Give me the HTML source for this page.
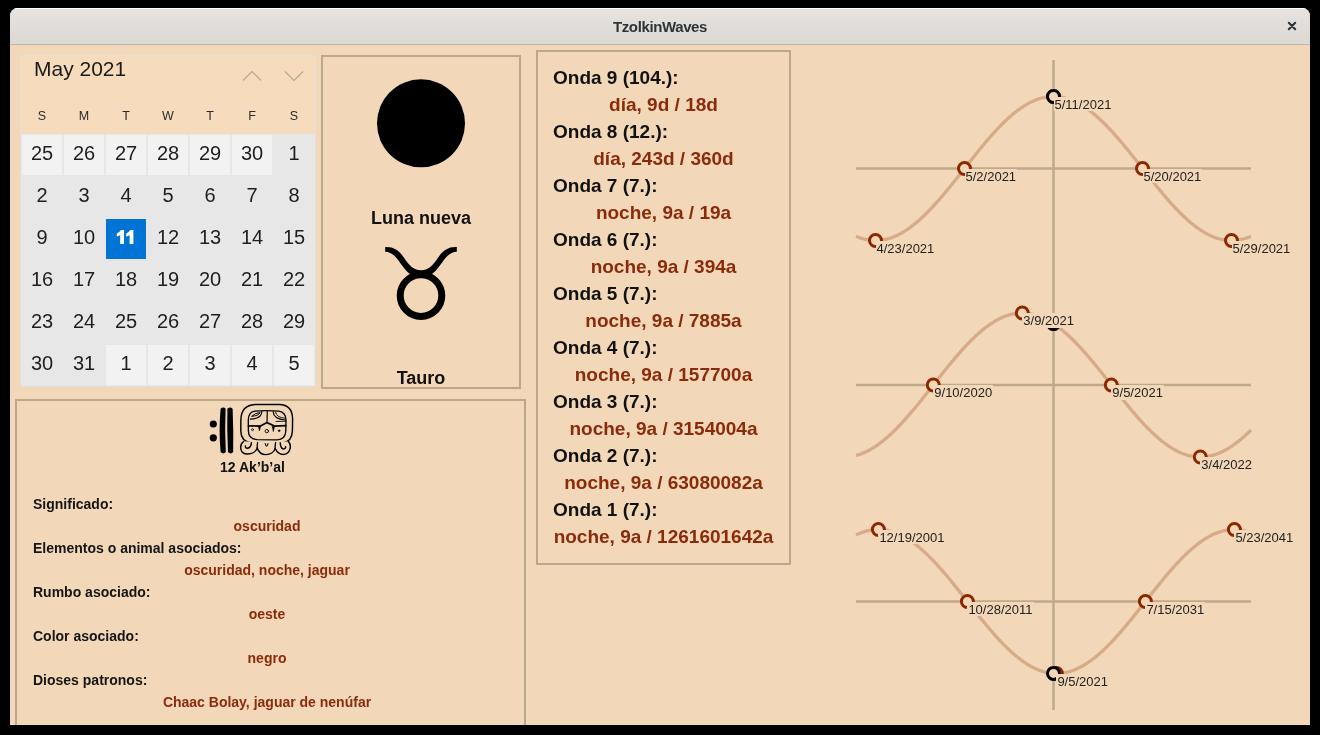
<!DOCTYPE html>
<html><head><meta charset="utf-8">
<style>
*{box-sizing:border-box}
html,body{margin:0;padding:0;width:1320px;height:735px;overflow:hidden;background:#000}
body{font-family:"Liberation Sans",sans-serif;position:relative;will-change:transform}
.win{position:absolute;left:10px;top:8px;width:1300px;height:717px;border-radius:8px 8px 0 0;overflow:hidden;background:#f2d8b8}
.tb{position:absolute;left:0;top:0;width:1300px;height:37px;background:linear-gradient(#e6e3e0,#dcd8d4);border-bottom:1px solid #bdb6ae;box-shadow:inset 0 1px #fff}
.title{position:absolute;left:0;top:0;width:1300px;text-align:center;line-height:36px;font-weight:bold;font-size:15px;letter-spacing:-0.38px;color:#2e3436;padding-top:1px}
.abs{position:absolute}
.cal{position:absolute;left:20px;top:55px;width:296px;height:332px;border:1px solid #e3e0dc;border-radius:3px;background:#f6dcbd;overflow:hidden}
.grid{position:absolute;left:21px;top:134px;width:294px;height:252px;background:#e7e7e7}
.c{position:absolute;width:40px;height:40px;text-align:center;line-height:37px;font-size:20px;color:#1e1e1e}
.c.o{background:#f2f2f2}
.c.sel{background:#0074d4;color:#fff;font-weight:bold}
.dn{position:absolute;top:109px;width:40px;text-align:center;font-size:12.5px;color:#2a2a2a}
.panel{position:absolute;border:2px solid #bba78c}
svg .ax{stroke:#bfa98b;stroke-width:2.5}
svg .cv{stroke:#d7ab88;stroke-width:3.3;fill:none}
svg .rg{stroke:#8b2800;stroke-width:3;fill:#f2d8b8}
svg .rgb{stroke:#000;stroke-width:3;fill:#f2d8b8}
.lb{position:absolute;background:#f2d8b8;font-size:13px;line-height:14.5px;height:14.5px;padding:1px 1px 0 1px;color:#222;white-space:nowrap}
.ol{position:absolute;left:553px;font-size:19px;font-weight:bold;color:#111;white-space:nowrap}
.ov{position:absolute;left:537px;width:253px;text-align:center;font-size:19px;font-weight:bold;color:#8a2c0c;white-space:nowrap}
.kl{position:absolute;left:33px;font-size:14px;font-weight:bold;color:#151515;white-space:nowrap}
.kv{position:absolute;left:15px;width:504px;text-align:center;font-size:14px;font-weight:bold;color:#8a2c0c;white-space:nowrap}
</style></head><body>
<div class="win">
 <div class="tb"><div class="title">TzolkinWaves</div></div>
</div>
<svg class="abs" style="left:1284px;top:18px" width="16" height="16" viewBox="0 0 16 16"><path d="M4.8 4.8 L11.2 11.2 M11.2 4.8 L4.8 11.2" stroke="#2e3436" stroke-width="2.1" stroke-linecap="round"/></svg>

<div class="cal">
</div>
<div class="abs" style="left:34px;top:57.3px;font-size:21px;color:#1a1a1a;line-height:24px">May 2021</div>
<svg class="abs" style="left:240px;top:66px" width="70" height="20" viewBox="240 66 70 20"><path d="M243 80.5 L252 71.5 L261 80.5 M285 71.5 L294 80.5 L303 71.5" stroke="#b8a88e" stroke-width="1.2" fill="none"/></svg>
<div class="dn" style="left:22px">S</div><div class="dn" style="left:64px">M</div><div class="dn" style="left:106px">T</div><div class="dn" style="left:148px">W</div><div class="dn" style="left:190px">T</div><div class="dn" style="left:232px">F</div><div class="dn" style="left:274px">S</div>
<div class="grid"></div>
<div class="c o" style="left:22px;top:135px">25</div>
<div class="c o" style="left:64px;top:135px">26</div>
<div class="c o" style="left:106px;top:135px">27</div>
<div class="c o" style="left:148px;top:135px">28</div>
<div class="c o" style="left:190px;top:135px">29</div>
<div class="c o" style="left:232px;top:135px">30</div>
<div class="c" style="left:274px;top:135px">1</div>
<div class="c" style="left:22px;top:177px">2</div>
<div class="c" style="left:64px;top:177px">3</div>
<div class="c" style="left:106px;top:177px">4</div>
<div class="c" style="left:148px;top:177px">5</div>
<div class="c" style="left:190px;top:177px">6</div>
<div class="c" style="left:232px;top:177px">7</div>
<div class="c" style="left:274px;top:177px">8</div>
<div class="c" style="left:22px;top:219px">9</div>
<div class="c" style="left:64px;top:219px">10</div>
<div class="c sel" style="left:106px;top:219px"><svg width="40" height="40" viewBox="106 219 40 40" style="display:block"><path d="M120.2 244 L124 244 L124 230 L121 230 Q119.5 232.4 116.8 233.4 L116.8 236.6 Q118.8 236 120.2 235 Z M129.6 244 L133.4 244 L133.4 230 L130.4 230 Q128.9 232.4 126.2 233.4 L126.2 236.6 Q128.2 236 129.6 235 Z" fill="#fff"/></svg></div>
<div class="c" style="left:148px;top:219px">12</div>
<div class="c" style="left:190px;top:219px">13</div>
<div class="c" style="left:232px;top:219px">14</div>
<div class="c" style="left:274px;top:219px">15</div>
<div class="c" style="left:22px;top:261px">16</div>
<div class="c" style="left:64px;top:261px">17</div>
<div class="c" style="left:106px;top:261px">18</div>
<div class="c" style="left:148px;top:261px">19</div>
<div class="c" style="left:190px;top:261px">20</div>
<div class="c" style="left:232px;top:261px">21</div>
<div class="c" style="left:274px;top:261px">22</div>
<div class="c" style="left:22px;top:303px">23</div>
<div class="c" style="left:64px;top:303px">24</div>
<div class="c" style="left:106px;top:303px">25</div>
<div class="c" style="left:148px;top:303px">26</div>
<div class="c" style="left:190px;top:303px">27</div>
<div class="c" style="left:232px;top:303px">28</div>
<div class="c" style="left:274px;top:303px">29</div>
<div class="c" style="left:22px;top:345px">30</div>
<div class="c" style="left:64px;top:345px">31</div>
<div class="c o" style="left:106px;top:345px">1</div>
<div class="c o" style="left:148px;top:345px">2</div>
<div class="c o" style="left:190px;top:345px">3</div>
<div class="c o" style="left:232px;top:345px">4</div>
<div class="c o" style="left:274px;top:345px">5</div>

<div class="panel" style="left:321px;top:55px;width:200px;height:334px"></div>
<svg class="abs" style="left:321px;top:55px" width="200" height="334" viewBox="321 55 200 334">
<circle cx="421" cy="123.3" r="44" fill="#000"/>
<path d="M385.2 247 C394 246.6 399 250.5 403.5 257 C408.5 264.5 413 270.2 421 270.2 C429 270.2 433.5 264.5 438.5 257 C443 250.5 448 246.6 456.8 247 L456.8 251.8 C451.5 252 447.5 255 443.5 260.5 C439 267 434 273.5 428 277 L414 277 C408 273.5 403 267 398.5 260.5 C394.5 255 390.5 252 385.2 251.8 Z" fill="#000"/>
<circle cx="421" cy="295.6" r="20.8" stroke="#000" stroke-width="7" fill="none"/>
</svg>
<div class="abs" style="left:321px;top:208px;width:200px;text-align:center;font-weight:bold;font-size:18px;color:#111">Luna nueva</div>
<div class="abs" style="left:321px;top:367.5px;width:200px;text-align:center;font-weight:bold;font-size:18px;color:#111">Tauro</div>

<div class="panel" style="left:15px;top:399px;width:511px;height:340px"></div>
<svg style="position:absolute;left:205px;top:400px" width="31" height="60" viewBox="205 400 31 60">
<circle cx="213.3" cy="424" r="3.6" fill="#000"/>
<circle cx="213.3" cy="437.8" r="3.6" fill="#000"/>
<path d="M220.6 408.8 Q223.3 406.2 225.6 408.6 Q224.6 430 225.8 452 Q223.2 454.8 220.6 452 Q218.6 430 220.6 408.8 Z" fill="#000"/>
<path d="M227.4 408.8 Q230.2 406.4 232.6 408.8 Q233.6 430 233.2 452 Q230.6 454.8 228 452 Q226.8 430 227.4 408.8 Z" fill="#000"/>
</svg>
<svg style="position:absolute;left:236px;top:400px" width="60" height="60" viewBox="236 400 60 60">
<g fill="none" stroke="#000" stroke-linecap="round" stroke-linejoin="round">
<path d="M255 404.5 L279 404.5 Q292.5 404.8 292.6 419 L292.4 431 Q292 441.5 283 442.6 L251 442.6 Q241 441.5 240.8 431 L240.9 420 Q241 405.2 255 404.5 Z" stroke-width="1.45"/>
<path d="M255 411.1 Q267 410.2 279 411.2 Q285.8 412.5 286 420 L285.8 431 Q285.5 439.6 277 439.8 L257 439.6 Q248.6 439.2 248.4 431 L248.3 420 Q248.6 411.6 255 411.1 Z" stroke-width="1.35"/>
<path d="M248.4 426 Q254 425.6 260 426.2 L267 422.6 L275 426.2 Q280 426 285.9 425.6" stroke-width="1.7"/>
<path d="M261.8 411.6 Q262 418.5 250.4 419.2" stroke-width="1.2"/>
<path d="M252 416.2 Q255 412.8 260 412.6 Q258.5 416 252 416.2 Z" stroke-width="1.0"/>
<path d="M267.3 411.2 L267 422.6" stroke-width="1.2"/>
<path d="M273.2 411.8 Q273.5 419.2 285.4 420" stroke-width="1.2"/>
<path d="M275.6 412.3 Q276.5 417.6 285 418.2" stroke-width="0.9"/>
<path d="M276 421.4 L285.8 421.2" stroke-width="0.9"/>
<path d="M258.3 426.2 L259.4 430.8 L260.8 426.2 Z M272.2 426.2 L273.3 431.6 L274.6 426.2 Z" fill="#000" stroke-width="0.6"/>
<circle cx="252.5" cy="429.7" r="1.0" stroke-width="0.7"/>
<circle cx="266.8" cy="431.1" r="1.7" stroke-width="0.9"/>
<circle cx="279.1" cy="430.7" r="0.9" fill="#000" stroke-width="0.5"/>
<path d="M243.6 441.5 C239 445 239.6 454 247.6 454 C252 454 256 451.5 257.2 448 C258.5 452 262 454.6 266 454.6 C270 454.6 274 452.2 275.2 448.5 C277 452.5 280 454.6 284 454.4 C290.5 453.6 291.8 445.5 288.5 441.5" fill="#f2d8b8" stroke-width="1.45"/>
<path d="M257.2 448 Q257 445 257.6 442.6 M275.2 448.5 Q275 445.5 275.6 442.6" stroke-width="1.3"/>
<path d="M251.4 442.6 Q251.2 447.6 247.4 448.3 Q245.2 448.2 245.4 446" stroke-width="1.4"/>
<path d="M265.2 443.6 Q266.6 448.8 268 443.6" stroke-width="1.1"/>
<path d="M280.2 442.6 Q280.6 448.6 283.6 449 Q285.8 448.8 285.6 446.6" stroke-width="1.4"/>
</g>
</svg>

<div class="abs" style="left:15px;top:459px;width:475px;text-align:center;font-weight:bold;font-size:14px;color:#111">12 Ak’b’al</div>
<div class="kl" style="top:496px">Significado:</div>
<div class="kv" style="top:518px">oscuridad</div>
<div class="kl" style="top:540px">Elementos o animal asociados:</div>
<div class="kv" style="top:562px">oscuridad, noche, jaguar</div>
<div class="kl" style="top:584px">Rumbo asociado:</div>
<div class="kv" style="top:606px">oeste</div>
<div class="kl" style="top:628px">Color asociado:</div>
<div class="kv" style="top:650px">negro</div>
<div class="kl" style="top:672px">Dioses patronos:</div>
<div class="kv" style="top:694px">Chaac Bolay, jaguar de nenúfar</div>

<div class="panel" style="left:536px;top:50px;width:255px;height:515px"></div>
<div class="ol" style="top:66.5px">Onda 9 (104.):</div>
<div class="ov" style="top:93.5px">día, 9d / 18d</div>
<div class="ol" style="top:120.5px">Onda 8 (12.):</div>
<div class="ov" style="top:147.5px">día, 243d / 360d</div>
<div class="ol" style="top:174.5px">Onda 7 (7.):</div>
<div class="ov" style="top:201.5px">noche, 9a / 19a</div>
<div class="ol" style="top:228.5px">Onda 6 (7.):</div>
<div class="ov" style="top:255.5px">noche, 9a / 394a</div>
<div class="ol" style="top:282.5px">Onda 5 (7.):</div>
<div class="ov" style="top:309.5px">noche, 9a / 7885a</div>
<div class="ol" style="top:336.5px">Onda 4 (7.):</div>
<div class="ov" style="top:363.5px">noche, 9a / 157700a</div>
<div class="ol" style="top:390.5px">Onda 3 (7.):</div>
<div class="ov" style="top:417.5px">noche, 9a / 3154004a</div>
<div class="ol" style="top:444.5px">Onda 2 (7.):</div>
<div class="ov" style="top:471.5px">noche, 9a / 63080082a</div>
<div class="ol" style="top:498.5px">Onda 1 (7.):</div>
<div class="ov" style="top:525.5px">noche, 9a / 1261601642a</div>

<svg class="abs" style="left:0;top:0" width="1320" height="735" viewBox="0 0 1320 735">
<line x1="1053.5" y1="60" x2="1053.5" y2="710" class="ax"/>
<line x1="856" y1="168.5" x2="1251" y2="168.5" class="ax"/>
<line x1="856" y1="385.0" x2="1251" y2="385.0" class="ax"/>
<line x1="856" y1="601.5" x2="1251" y2="601.5" class="ax"/>
<path d="M856.0,236.28 L857.0,236.70 L858.0,237.09 L859.0,237.47 L860.0,237.82 L861.0,238.16 L862.0,238.47 L863.0,238.75 L864.0,239.02 L865.0,239.27 L866.0,239.49 L867.0,239.69 L868.0,239.87 L869.0,240.03 L870.0,240.16 L871.0,240.27 L872.0,240.36 L873.0,240.43 L874.0,240.47 L875.0,240.50 L876.0,240.50 L877.0,240.47 L878.0,240.43 L879.0,240.36 L880.0,240.27 L881.0,240.16 L882.0,240.03 L883.0,239.87 L884.0,239.69 L885.0,239.49 L886.0,239.27 L887.0,239.02 L888.0,238.75 L889.0,238.47 L890.0,238.16 L891.0,237.82 L892.0,237.47 L893.0,237.09 L894.0,236.70 L895.0,236.28 L896.0,235.84 L897.0,235.38 L898.0,234.90 L899.0,234.40 L900.0,233.87 L901.0,233.33 L902.0,232.77 L903.0,232.18 L904.0,231.58 L905.0,230.96 L906.0,230.32 L907.0,229.66 L908.0,228.98 L909.0,228.28 L910.0,227.56 L911.0,226.82 L912.0,226.07 L913.0,225.30 L914.0,224.51 L915.0,223.70 L916.0,222.88 L917.0,222.03 L918.0,221.18 L919.0,220.30 L920.0,219.41 L921.0,218.51 L922.0,217.58 L923.0,216.65 L924.0,215.69 L925.0,214.73 L926.0,213.75 L927.0,212.75 L928.0,211.74 L929.0,210.72 L930.0,209.68 L931.0,208.63 L932.0,207.57 L933.0,206.50 L934.0,205.41 L935.0,204.32 L936.0,203.21 L937.0,202.09 L938.0,200.96 L939.0,199.82 L940.0,198.67 L941.0,197.51 L942.0,196.35 L943.0,195.17 L944.0,193.99 L945.0,192.79 L946.0,191.59 L947.0,190.39 L948.0,189.17 L949.0,187.95 L950.0,186.73 L951.0,185.49 L952.0,184.26 L953.0,183.01 L954.0,181.77 L955.0,180.52 L956.0,179.26 L957.0,178.00 L958.0,176.74 L959.0,175.48 L960.0,174.21 L961.0,172.94 L962.0,171.68 L963.0,170.41 L964.0,169.14 L965.0,167.86 L966.0,166.59 L967.0,165.32 L968.0,164.06 L969.0,162.79 L970.0,161.52 L971.0,160.26 L972.0,159.00 L973.0,157.74 L974.0,156.48 L975.0,155.23 L976.0,153.99 L977.0,152.74 L978.0,151.51 L979.0,150.27 L980.0,149.05 L981.0,147.83 L982.0,146.61 L983.0,145.41 L984.0,144.21 L985.0,143.01 L986.0,141.83 L987.0,140.65 L988.0,139.49 L989.0,138.33 L990.0,137.18 L991.0,136.04 L992.0,134.91 L993.0,133.79 L994.0,132.68 L995.0,131.59 L996.0,130.50 L997.0,129.43 L998.0,128.37 L999.0,127.32 L1000.0,126.28 L1001.0,125.26 L1002.0,124.25 L1003.0,123.25 L1004.0,122.27 L1005.0,121.31 L1006.0,120.35 L1007.0,119.42 L1008.0,118.49 L1009.0,117.59 L1010.0,116.70 L1011.0,115.82 L1012.0,114.97 L1013.0,114.12 L1014.0,113.30 L1015.0,112.49 L1016.0,111.70 L1017.0,110.93 L1018.0,110.18 L1019.0,109.44 L1020.0,108.72 L1021.0,108.02 L1022.0,107.34 L1023.0,106.68 L1024.0,106.04 L1025.0,105.42 L1026.0,104.82 L1027.0,104.23 L1028.0,103.67 L1029.0,103.13 L1030.0,102.60 L1031.0,102.10 L1032.0,101.62 L1033.0,101.16 L1034.0,100.72 L1035.0,100.30 L1036.0,99.91 L1037.0,99.53 L1038.0,99.18 L1039.0,98.84 L1040.0,98.53 L1041.0,98.25 L1042.0,97.98 L1043.0,97.73 L1044.0,97.51 L1045.0,97.31 L1046.0,97.13 L1047.0,96.97 L1048.0,96.84 L1049.0,96.73 L1050.0,96.64 L1051.0,96.57 L1052.0,96.53 L1053.0,96.50 L1054.0,96.50 L1055.0,96.53 L1056.0,96.57 L1057.0,96.64 L1058.0,96.73 L1059.0,96.84 L1060.0,96.97 L1061.0,97.13 L1062.0,97.31 L1063.0,97.51 L1064.0,97.73 L1065.0,97.98 L1066.0,98.25 L1067.0,98.53 L1068.0,98.84 L1069.0,99.18 L1070.0,99.53 L1071.0,99.91 L1072.0,100.30 L1073.0,100.72 L1074.0,101.16 L1075.0,101.62 L1076.0,102.10 L1077.0,102.60 L1078.0,103.13 L1079.0,103.67 L1080.0,104.23 L1081.0,104.82 L1082.0,105.42 L1083.0,106.04 L1084.0,106.68 L1085.0,107.34 L1086.0,108.02 L1087.0,108.72 L1088.0,109.44 L1089.0,110.18 L1090.0,110.93 L1091.0,111.70 L1092.0,112.49 L1093.0,113.30 L1094.0,114.12 L1095.0,114.97 L1096.0,115.82 L1097.0,116.70 L1098.0,117.59 L1099.0,118.49 L1100.0,119.42 L1101.0,120.35 L1102.0,121.31 L1103.0,122.27 L1104.0,123.25 L1105.0,124.25 L1106.0,125.26 L1107.0,126.28 L1108.0,127.32 L1109.0,128.37 L1110.0,129.43 L1111.0,130.50 L1112.0,131.59 L1113.0,132.68 L1114.0,133.79 L1115.0,134.91 L1116.0,136.04 L1117.0,137.18 L1118.0,138.33 L1119.0,139.49 L1120.0,140.65 L1121.0,141.83 L1122.0,143.01 L1123.0,144.21 L1124.0,145.41 L1125.0,146.61 L1126.0,147.83 L1127.0,149.05 L1128.0,150.27 L1129.0,151.51 L1130.0,152.74 L1131.0,153.99 L1132.0,155.23 L1133.0,156.48 L1134.0,157.74 L1135.0,159.00 L1136.0,160.26 L1137.0,161.52 L1138.0,162.79 L1139.0,164.06 L1140.0,165.32 L1141.0,166.59 L1142.0,167.86 L1143.0,169.14 L1144.0,170.41 L1145.0,171.68 L1146.0,172.94 L1147.0,174.21 L1148.0,175.48 L1149.0,176.74 L1150.0,178.00 L1151.0,179.26 L1152.0,180.52 L1153.0,181.77 L1154.0,183.01 L1155.0,184.26 L1156.0,185.49 L1157.0,186.73 L1158.0,187.95 L1159.0,189.17 L1160.0,190.39 L1161.0,191.59 L1162.0,192.79 L1163.0,193.99 L1164.0,195.17 L1165.0,196.35 L1166.0,197.51 L1167.0,198.67 L1168.0,199.82 L1169.0,200.96 L1170.0,202.09 L1171.0,203.21 L1172.0,204.32 L1173.0,205.41 L1174.0,206.50 L1175.0,207.57 L1176.0,208.63 L1177.0,209.68 L1178.0,210.72 L1179.0,211.74 L1180.0,212.75 L1181.0,213.75 L1182.0,214.73 L1183.0,215.69 L1184.0,216.65 L1185.0,217.58 L1186.0,218.51 L1187.0,219.41 L1188.0,220.30 L1189.0,221.18 L1190.0,222.03 L1191.0,222.88 L1192.0,223.70 L1193.0,224.51 L1194.0,225.30 L1195.0,226.07 L1196.0,226.82 L1197.0,227.56 L1198.0,228.28 L1199.0,228.98 L1200.0,229.66 L1201.0,230.32 L1202.0,230.96 L1203.0,231.58 L1204.0,232.18 L1205.0,232.77 L1206.0,233.33 L1207.0,233.87 L1208.0,234.40 L1209.0,234.90 L1210.0,235.38 L1211.0,235.84 L1212.0,236.28 L1213.0,236.70 L1214.0,237.09 L1215.0,237.47 L1216.0,237.82 L1217.0,238.16 L1218.0,238.47 L1219.0,238.75 L1220.0,239.02 L1221.0,239.27 L1222.0,239.49 L1223.0,239.69 L1224.0,239.87 L1225.0,240.03 L1226.0,240.16 L1227.0,240.27 L1228.0,240.36 L1229.0,240.43 L1230.0,240.47 L1231.0,240.50 L1232.0,240.50 L1233.0,240.47 L1234.0,240.43 L1235.0,240.36 L1236.0,240.27 L1237.0,240.16 L1238.0,240.03 L1239.0,239.87 L1240.0,239.69 L1241.0,239.49 L1242.0,239.27 L1243.0,239.02 L1244.0,238.75 L1245.0,238.47 L1246.0,238.16 L1247.0,237.82 L1248.0,237.47 L1249.0,237.09 L1250.0,236.70 L1251.0,236.28" class="cv"/>
<path d="M856.0,455.47 L857.0,455.20 L858.0,454.91 L859.0,454.59 L860.0,454.25 L861.0,453.90 L862.0,453.52 L863.0,453.11 L864.0,452.69 L865.0,452.25 L866.0,451.78 L867.0,451.30 L868.0,450.79 L869.0,450.27 L870.0,449.72 L871.0,449.15 L872.0,448.57 L873.0,447.96 L874.0,447.33 L875.0,446.69 L876.0,446.02 L877.0,445.34 L878.0,444.64 L879.0,443.91 L880.0,443.17 L881.0,442.42 L882.0,441.64 L883.0,440.85 L884.0,440.04 L885.0,439.21 L886.0,438.36 L887.0,437.50 L888.0,436.63 L889.0,435.73 L890.0,434.82 L891.0,433.90 L892.0,432.96 L893.0,432.00 L894.0,431.03 L895.0,430.05 L896.0,429.05 L897.0,428.04 L898.0,427.01 L899.0,425.97 L900.0,424.92 L901.0,423.86 L902.0,422.78 L903.0,421.69 L904.0,420.60 L905.0,419.49 L906.0,418.36 L907.0,417.23 L908.0,416.09 L909.0,414.94 L910.0,413.78 L911.0,412.61 L912.0,411.43 L913.0,410.25 L914.0,409.05 L915.0,407.85 L916.0,406.64 L917.0,405.43 L918.0,404.21 L919.0,402.98 L920.0,401.75 L921.0,400.51 L922.0,399.26 L923.0,398.02 L924.0,396.77 L925.0,395.51 L926.0,394.25 L927.0,392.99 L928.0,391.73 L929.0,390.46 L930.0,389.19 L931.0,387.92 L932.0,386.65 L933.0,385.38 L934.0,384.11 L935.0,382.84 L936.0,381.57 L937.0,380.30 L938.0,379.03 L939.0,377.77 L940.0,376.51 L941.0,375.25 L942.0,373.99 L943.0,372.73 L944.0,371.48 L945.0,370.24 L946.0,369.00 L947.0,367.76 L948.0,366.53 L949.0,365.30 L950.0,364.08 L951.0,362.87 L952.0,361.67 L953.0,360.47 L954.0,359.28 L955.0,358.09 L956.0,356.92 L957.0,355.75 L958.0,354.60 L959.0,353.45 L960.0,352.31 L961.0,351.19 L962.0,350.07 L963.0,348.96 L964.0,347.87 L965.0,346.79 L966.0,345.71 L967.0,344.66 L968.0,343.61 L969.0,342.58 L970.0,341.56 L971.0,340.55 L972.0,339.56 L973.0,338.58 L974.0,337.61 L975.0,336.67 L976.0,335.73 L977.0,334.81 L978.0,333.91 L979.0,333.02 L980.0,332.15 L981.0,331.30 L982.0,330.46 L983.0,329.64 L984.0,328.83 L985.0,328.05 L986.0,327.28 L987.0,326.53 L988.0,325.80 L989.0,325.08 L990.0,324.39 L991.0,323.71 L992.0,323.05 L993.0,322.41 L994.0,321.80 L995.0,321.20 L996.0,320.62 L997.0,320.06 L998.0,319.52 L999.0,319.00 L1000.0,318.51 L1001.0,318.03 L1002.0,317.57 L1003.0,317.14 L1004.0,316.72 L1005.0,316.33 L1006.0,315.96 L1007.0,315.61 L1008.0,315.28 L1009.0,314.97 L1010.0,314.69 L1011.0,314.43 L1012.0,314.19 L1013.0,313.97 L1014.0,313.77 L1015.0,313.60 L1016.0,313.44 L1017.0,313.31 L1018.0,313.21 L1019.0,313.12 L1020.0,313.06 L1021.0,313.02 L1022.0,313.00 L1023.0,313.01 L1024.0,313.03 L1025.0,313.08 L1026.0,313.15 L1027.0,313.25 L1028.0,313.36 L1029.0,313.50 L1030.0,313.66 L1031.0,313.85 L1032.0,314.05 L1033.0,314.28 L1034.0,314.53 L1035.0,314.80 L1036.0,315.09 L1037.0,315.41 L1038.0,315.75 L1039.0,316.10 L1040.0,316.48 L1041.0,316.89 L1042.0,317.31 L1043.0,317.75 L1044.0,318.22 L1045.0,318.70 L1046.0,319.21 L1047.0,319.73 L1048.0,320.28 L1049.0,320.85 L1050.0,321.43 L1051.0,322.04 L1052.0,322.67 L1053.0,323.31 L1054.0,323.98 L1055.0,324.66 L1056.0,325.36 L1057.0,326.09 L1058.0,326.83 L1059.0,327.58 L1060.0,328.36 L1061.0,329.15 L1062.0,329.96 L1063.0,330.79 L1064.0,331.64 L1065.0,332.50 L1066.0,333.37 L1067.0,334.27 L1068.0,335.18 L1069.0,336.10 L1070.0,337.04 L1071.0,338.00 L1072.0,338.97 L1073.0,339.95 L1074.0,340.95 L1075.0,341.96 L1076.0,342.99 L1077.0,344.03 L1078.0,345.08 L1079.0,346.14 L1080.0,347.22 L1081.0,348.31 L1082.0,349.40 L1083.0,350.51 L1084.0,351.64 L1085.0,352.77 L1086.0,353.91 L1087.0,355.06 L1088.0,356.22 L1089.0,357.39 L1090.0,358.57 L1091.0,359.75 L1092.0,360.95 L1093.0,362.15 L1094.0,363.36 L1095.0,364.57 L1096.0,365.79 L1097.0,367.02 L1098.0,368.25 L1099.0,369.49 L1100.0,370.74 L1101.0,371.98 L1102.0,373.23 L1103.0,374.49 L1104.0,375.75 L1105.0,377.01 L1106.0,378.27 L1107.0,379.54 L1108.0,380.81 L1109.0,382.08 L1110.0,383.35 L1111.0,384.62 L1112.0,385.89 L1113.0,387.16 L1114.0,388.43 L1115.0,389.70 L1116.0,390.97 L1117.0,392.23 L1118.0,393.49 L1119.0,394.75 L1120.0,396.01 L1121.0,397.27 L1122.0,398.52 L1123.0,399.76 L1124.0,401.00 L1125.0,402.24 L1126.0,403.47 L1127.0,404.70 L1128.0,405.92 L1129.0,407.13 L1130.0,408.33 L1131.0,409.53 L1132.0,410.72 L1133.0,411.91 L1134.0,413.08 L1135.0,414.25 L1136.0,415.40 L1137.0,416.55 L1138.0,417.69 L1139.0,418.81 L1140.0,419.93 L1141.0,421.04 L1142.0,422.13 L1143.0,423.21 L1144.0,424.29 L1145.0,425.34 L1146.0,426.39 L1147.0,427.42 L1148.0,428.44 L1149.0,429.45 L1150.0,430.44 L1151.0,431.42 L1152.0,432.39 L1153.0,433.33 L1154.0,434.27 L1155.0,435.19 L1156.0,436.09 L1157.0,436.98 L1158.0,437.85 L1159.0,438.70 L1160.0,439.54 L1161.0,440.36 L1162.0,441.17 L1163.0,441.95 L1164.0,442.72 L1165.0,443.47 L1166.0,444.20 L1167.0,444.92 L1168.0,445.61 L1169.0,446.29 L1170.0,446.95 L1171.0,447.59 L1172.0,448.20 L1173.0,448.80 L1174.0,449.38 L1175.0,449.94 L1176.0,450.48 L1177.0,451.00 L1178.0,451.49 L1179.0,451.97 L1180.0,452.43 L1181.0,452.86 L1182.0,453.28 L1183.0,453.67 L1184.0,454.04 L1185.0,454.39 L1186.0,454.72 L1187.0,455.03 L1188.0,455.31 L1189.0,455.57 L1190.0,455.81 L1191.0,456.03 L1192.0,456.23 L1193.0,456.40 L1194.0,456.56 L1195.0,456.69 L1196.0,456.79 L1197.0,456.88 L1198.0,456.94 L1199.0,456.98 L1200.0,457.00 L1201.0,456.99 L1202.0,456.97 L1203.0,456.92 L1204.0,456.85 L1205.0,456.75 L1206.0,456.64 L1207.0,456.50 L1208.0,456.34 L1209.0,456.15 L1210.0,455.95 L1211.0,455.72 L1212.0,455.47 L1213.0,455.20 L1214.0,454.91 L1215.0,454.59 L1216.0,454.25 L1217.0,453.90 L1218.0,453.52 L1219.0,453.11 L1220.0,452.69 L1221.0,452.25 L1222.0,451.78 L1223.0,451.30 L1224.0,450.79 L1225.0,450.27 L1226.0,449.72 L1227.0,449.15 L1228.0,448.57 L1229.0,447.96 L1230.0,447.33 L1231.0,446.69 L1232.0,446.02 L1233.0,445.34 L1234.0,444.64 L1235.0,443.91 L1236.0,443.17 L1237.0,442.42 L1238.0,441.64 L1239.0,440.85 L1240.0,440.04 L1241.0,439.21 L1242.0,438.36 L1243.0,437.50 L1244.0,436.63 L1245.0,435.73 L1246.0,434.82 L1247.0,433.90 L1248.0,432.96 L1249.0,432.00 L1250.0,431.03 L1251.0,430.05" class="cv"/>
<path d="M856.0,535.05 L857.0,534.57 L858.0,534.12 L859.0,533.68 L860.0,533.26 L861.0,532.87 L862.0,532.50 L863.0,532.14 L864.0,531.81 L865.0,531.50 L866.0,531.22 L867.0,530.95 L868.0,530.71 L869.0,530.49 L870.0,530.29 L871.0,530.11 L872.0,529.96 L873.0,529.83 L874.0,529.72 L875.0,529.63 L876.0,529.56 L877.0,529.52 L878.0,529.50 L879.0,529.50 L880.0,529.53 L881.0,529.58 L882.0,529.65 L883.0,529.74 L884.0,529.85 L885.0,529.99 L886.0,530.15 L887.0,530.33 L888.0,530.53 L889.0,530.76 L890.0,531.00 L891.0,531.27 L892.0,531.56 L893.0,531.88 L894.0,532.21 L895.0,532.57 L896.0,532.95 L897.0,533.34 L898.0,533.77 L899.0,534.21 L900.0,534.67 L901.0,535.15 L902.0,535.66 L903.0,536.18 L904.0,536.73 L905.0,537.29 L906.0,537.87 L907.0,538.48 L908.0,539.10 L909.0,539.75 L910.0,540.41 L911.0,541.09 L912.0,541.79 L913.0,542.51 L914.0,543.25 L915.0,544.01 L916.0,544.78 L917.0,545.57 L918.0,546.38 L919.0,547.21 L920.0,548.05 L921.0,548.91 L922.0,549.79 L923.0,550.68 L924.0,551.59 L925.0,552.51 L926.0,553.45 L927.0,554.40 L928.0,555.37 L929.0,556.35 L930.0,557.35 L931.0,558.36 L932.0,559.39 L933.0,560.42 L934.0,561.47 L935.0,562.53 L936.0,563.61 L937.0,564.70 L938.0,565.79 L939.0,566.90 L940.0,568.02 L941.0,569.15 L942.0,570.29 L943.0,571.44 L944.0,572.60 L945.0,573.77 L946.0,574.95 L947.0,576.13 L948.0,577.33 L949.0,578.53 L950.0,579.73 L951.0,580.95 L952.0,582.17 L953.0,583.40 L954.0,584.63 L955.0,585.87 L956.0,587.11 L957.0,588.36 L958.0,589.61 L959.0,590.86 L960.0,592.12 L961.0,593.38 L962.0,594.65 L963.0,595.91 L964.0,597.18 L965.0,598.45 L966.0,599.72 L967.0,600.99 L968.0,602.26 L969.0,603.53 L970.0,604.80 L971.0,606.07 L972.0,607.34 L973.0,608.60 L974.0,609.87 L975.0,611.13 L976.0,612.39 L977.0,613.64 L978.0,614.89 L979.0,616.14 L980.0,617.38 L981.0,618.62 L982.0,619.85 L983.0,621.07 L984.0,622.29 L985.0,623.51 L986.0,624.71 L987.0,625.91 L988.0,627.10 L989.0,628.29 L990.0,629.46 L991.0,630.63 L992.0,631.79 L993.0,632.94 L994.0,634.07 L995.0,635.20 L996.0,636.32 L997.0,637.43 L998.0,638.52 L999.0,639.61 L1000.0,640.68 L1001.0,641.74 L1002.0,642.79 L1003.0,643.82 L1004.0,644.84 L1005.0,645.85 L1006.0,646.84 L1007.0,647.82 L1008.0,648.79 L1009.0,649.74 L1010.0,650.68 L1011.0,651.60 L1012.0,652.50 L1013.0,653.39 L1014.0,654.26 L1015.0,655.12 L1016.0,655.96 L1017.0,656.78 L1018.0,657.59 L1019.0,658.38 L1020.0,659.15 L1021.0,659.90 L1022.0,660.63 L1023.0,661.35 L1024.0,662.05 L1025.0,662.72 L1026.0,663.38 L1027.0,664.02 L1028.0,664.64 L1029.0,665.24 L1030.0,665.82 L1031.0,666.39 L1032.0,666.93 L1033.0,667.45 L1034.0,667.95 L1035.0,668.43 L1036.0,668.88 L1037.0,669.32 L1038.0,669.74 L1039.0,670.13 L1040.0,670.50 L1041.0,670.86 L1042.0,671.19 L1043.0,671.50 L1044.0,671.78 L1045.0,672.05 L1046.0,672.29 L1047.0,672.51 L1048.0,672.71 L1049.0,672.89 L1050.0,673.04 L1051.0,673.17 L1052.0,673.28 L1053.0,673.37 L1054.0,673.44 L1055.0,673.48 L1056.0,673.50 L1057.0,673.50 L1058.0,673.47 L1059.0,673.42 L1060.0,673.35 L1061.0,673.26 L1062.0,673.15 L1063.0,673.01 L1064.0,672.85 L1065.0,672.67 L1066.0,672.47 L1067.0,672.24 L1068.0,672.00 L1069.0,671.73 L1070.0,671.44 L1071.0,671.12 L1072.0,670.79 L1073.0,670.43 L1074.0,670.05 L1075.0,669.66 L1076.0,669.23 L1077.0,668.79 L1078.0,668.33 L1079.0,667.85 L1080.0,667.34 L1081.0,666.82 L1082.0,666.27 L1083.0,665.71 L1084.0,665.13 L1085.0,664.52 L1086.0,663.90 L1087.0,663.25 L1088.0,662.59 L1089.0,661.91 L1090.0,661.21 L1091.0,660.49 L1092.0,659.75 L1093.0,658.99 L1094.0,658.22 L1095.0,657.43 L1096.0,656.62 L1097.0,655.79 L1098.0,654.95 L1099.0,654.09 L1100.0,653.21 L1101.0,652.32 L1102.0,651.41 L1103.0,650.49 L1104.0,649.55 L1105.0,648.60 L1106.0,647.63 L1107.0,646.65 L1108.0,645.65 L1109.0,644.64 L1110.0,643.61 L1111.0,642.58 L1112.0,641.53 L1113.0,640.47 L1114.0,639.39 L1115.0,638.30 L1116.0,637.21 L1117.0,636.10 L1118.0,634.98 L1119.0,633.85 L1120.0,632.71 L1121.0,631.56 L1122.0,630.40 L1123.0,629.23 L1124.0,628.05 L1125.0,626.87 L1126.0,625.67 L1127.0,624.47 L1128.0,623.27 L1129.0,622.05 L1130.0,620.83 L1131.0,619.60 L1132.0,618.37 L1133.0,617.13 L1134.0,615.89 L1135.0,614.64 L1136.0,613.39 L1137.0,612.14 L1138.0,610.88 L1139.0,609.62 L1140.0,608.35 L1141.0,607.09 L1142.0,605.82 L1143.0,604.55 L1144.0,603.28 L1145.0,602.01 L1146.0,600.74 L1147.0,599.47 L1148.0,598.20 L1149.0,596.93 L1150.0,595.66 L1151.0,594.40 L1152.0,593.13 L1153.0,591.87 L1154.0,590.61 L1155.0,589.36 L1156.0,588.11 L1157.0,586.86 L1158.0,585.62 L1159.0,584.38 L1160.0,583.15 L1161.0,581.93 L1162.0,580.71 L1163.0,579.49 L1164.0,578.29 L1165.0,577.09 L1166.0,575.90 L1167.0,574.71 L1168.0,573.54 L1169.0,572.37 L1170.0,571.21 L1171.0,570.06 L1172.0,568.93 L1173.0,567.80 L1174.0,566.68 L1175.0,565.57 L1176.0,564.48 L1177.0,563.39 L1178.0,562.32 L1179.0,561.26 L1180.0,560.21 L1181.0,559.18 L1182.0,558.16 L1183.0,557.15 L1184.0,556.16 L1185.0,555.18 L1186.0,554.21 L1187.0,553.26 L1188.0,552.32 L1189.0,551.40 L1190.0,550.50 L1191.0,549.61 L1192.0,548.74 L1193.0,547.88 L1194.0,547.04 L1195.0,546.22 L1196.0,545.41 L1197.0,544.62 L1198.0,543.85 L1199.0,543.10 L1200.0,542.37 L1201.0,541.65 L1202.0,540.95 L1203.0,540.28 L1204.0,539.62 L1205.0,538.98 L1206.0,538.36 L1207.0,537.76 L1208.0,537.18 L1209.0,536.61 L1210.0,536.07 L1211.0,535.55 L1212.0,535.05 L1213.0,534.57 L1214.0,534.12 L1215.0,533.68 L1216.0,533.26 L1217.0,532.87 L1218.0,532.50 L1219.0,532.14 L1220.0,531.81 L1221.0,531.50 L1222.0,531.22 L1223.0,530.95 L1224.0,530.71 L1225.0,530.49 L1226.0,530.29 L1227.0,530.11 L1228.0,529.96 L1229.0,529.83 L1230.0,529.72 L1231.0,529.63 L1232.0,529.56 L1233.0,529.52 L1234.0,529.50 L1235.0,529.50 L1236.0,529.53 L1237.0,529.58 L1238.0,529.65 L1239.0,529.74 L1240.0,529.85 L1241.0,529.99 L1242.0,530.15 L1243.0,530.33 L1244.0,530.53 L1245.0,530.76 L1246.0,531.00 L1247.0,531.27 L1248.0,531.56 L1249.0,531.88 L1250.0,532.21 L1251.0,532.57" class="cv"/>
<circle cx="875.5" cy="240.5" r="6" class="rg"/>
<circle cx="964.5" cy="168.5" r="6" class="rg"/>
<circle cx="1053.5" cy="96.5" r="6" class="rg"/>
<circle cx="1142.5" cy="168.5" r="6" class="rg"/>
<circle cx="1231.5" cy="240.5" r="6" class="rg"/>
<circle cx="1053.5" cy="96.5" r="6" class="rgb"/>
<circle cx="933.3" cy="385.0" r="6" class="rg"/>
<circle cx="1022.3" cy="313.0" r="6" class="rg"/>
<circle cx="1111.3" cy="385.0" r="6" class="rg"/>
<circle cx="1200.3" cy="457.0" r="6" class="rg"/>
<circle cx="1053.5" cy="323.6" r="6" class="rgb"/>
<circle cx="878.4" cy="529.5" r="6" class="rg"/>
<circle cx="967.4" cy="601.5" r="6" class="rg"/>
<circle cx="1056.4" cy="673.5" r="6" class="rg"/>
<circle cx="1145.4" cy="601.5" r="6" class="rg"/>
<circle cx="1234.4" cy="529.5" r="6" class="rg"/>
<circle cx="1053.5" cy="673.4" r="6" class="rgb"/>
</svg>
<div class="lb" style="left:875.5px;top:240.5px">4/23/2021</div>
<div class="lb" style="left:964.5px;top:168.5px">5/2/2021</div>
<div class="lb" style="left:1053.5px;top:96.5px">5/11/2021</div>
<div class="lb" style="left:1142.5px;top:168.5px">5/20/2021</div>
<div class="lb" style="left:1231.5px;top:240.5px">5/29/2021</div>
<div class="lb" style="left:933.3px;top:385.0px">9/10/2020</div>
<div class="lb" style="left:1022.3px;top:313.0px">3/9/2021</div>
<div class="lb" style="left:1111.3px;top:385.0px">9/5/2021</div>
<div class="lb" style="left:1200.3px;top:457.0px">3/4/2022</div>
<div class="lb" style="left:878.4px;top:529.5px">12/19/2001</div>
<div class="lb" style="left:967.4px;top:601.5px">10/28/2011</div>
<div class="lb" style="left:1056.4px;top:673.5px">9/5/2021</div>
<div class="lb" style="left:1145.4px;top:601.5px">7/15/2031</div>
<div class="lb" style="left:1234.4px;top:529.5px">5/23/2041</div>
<div class="abs" style="left:0;top:725px;width:1320px;height:10px;background:#000"></div>
</body></html>
